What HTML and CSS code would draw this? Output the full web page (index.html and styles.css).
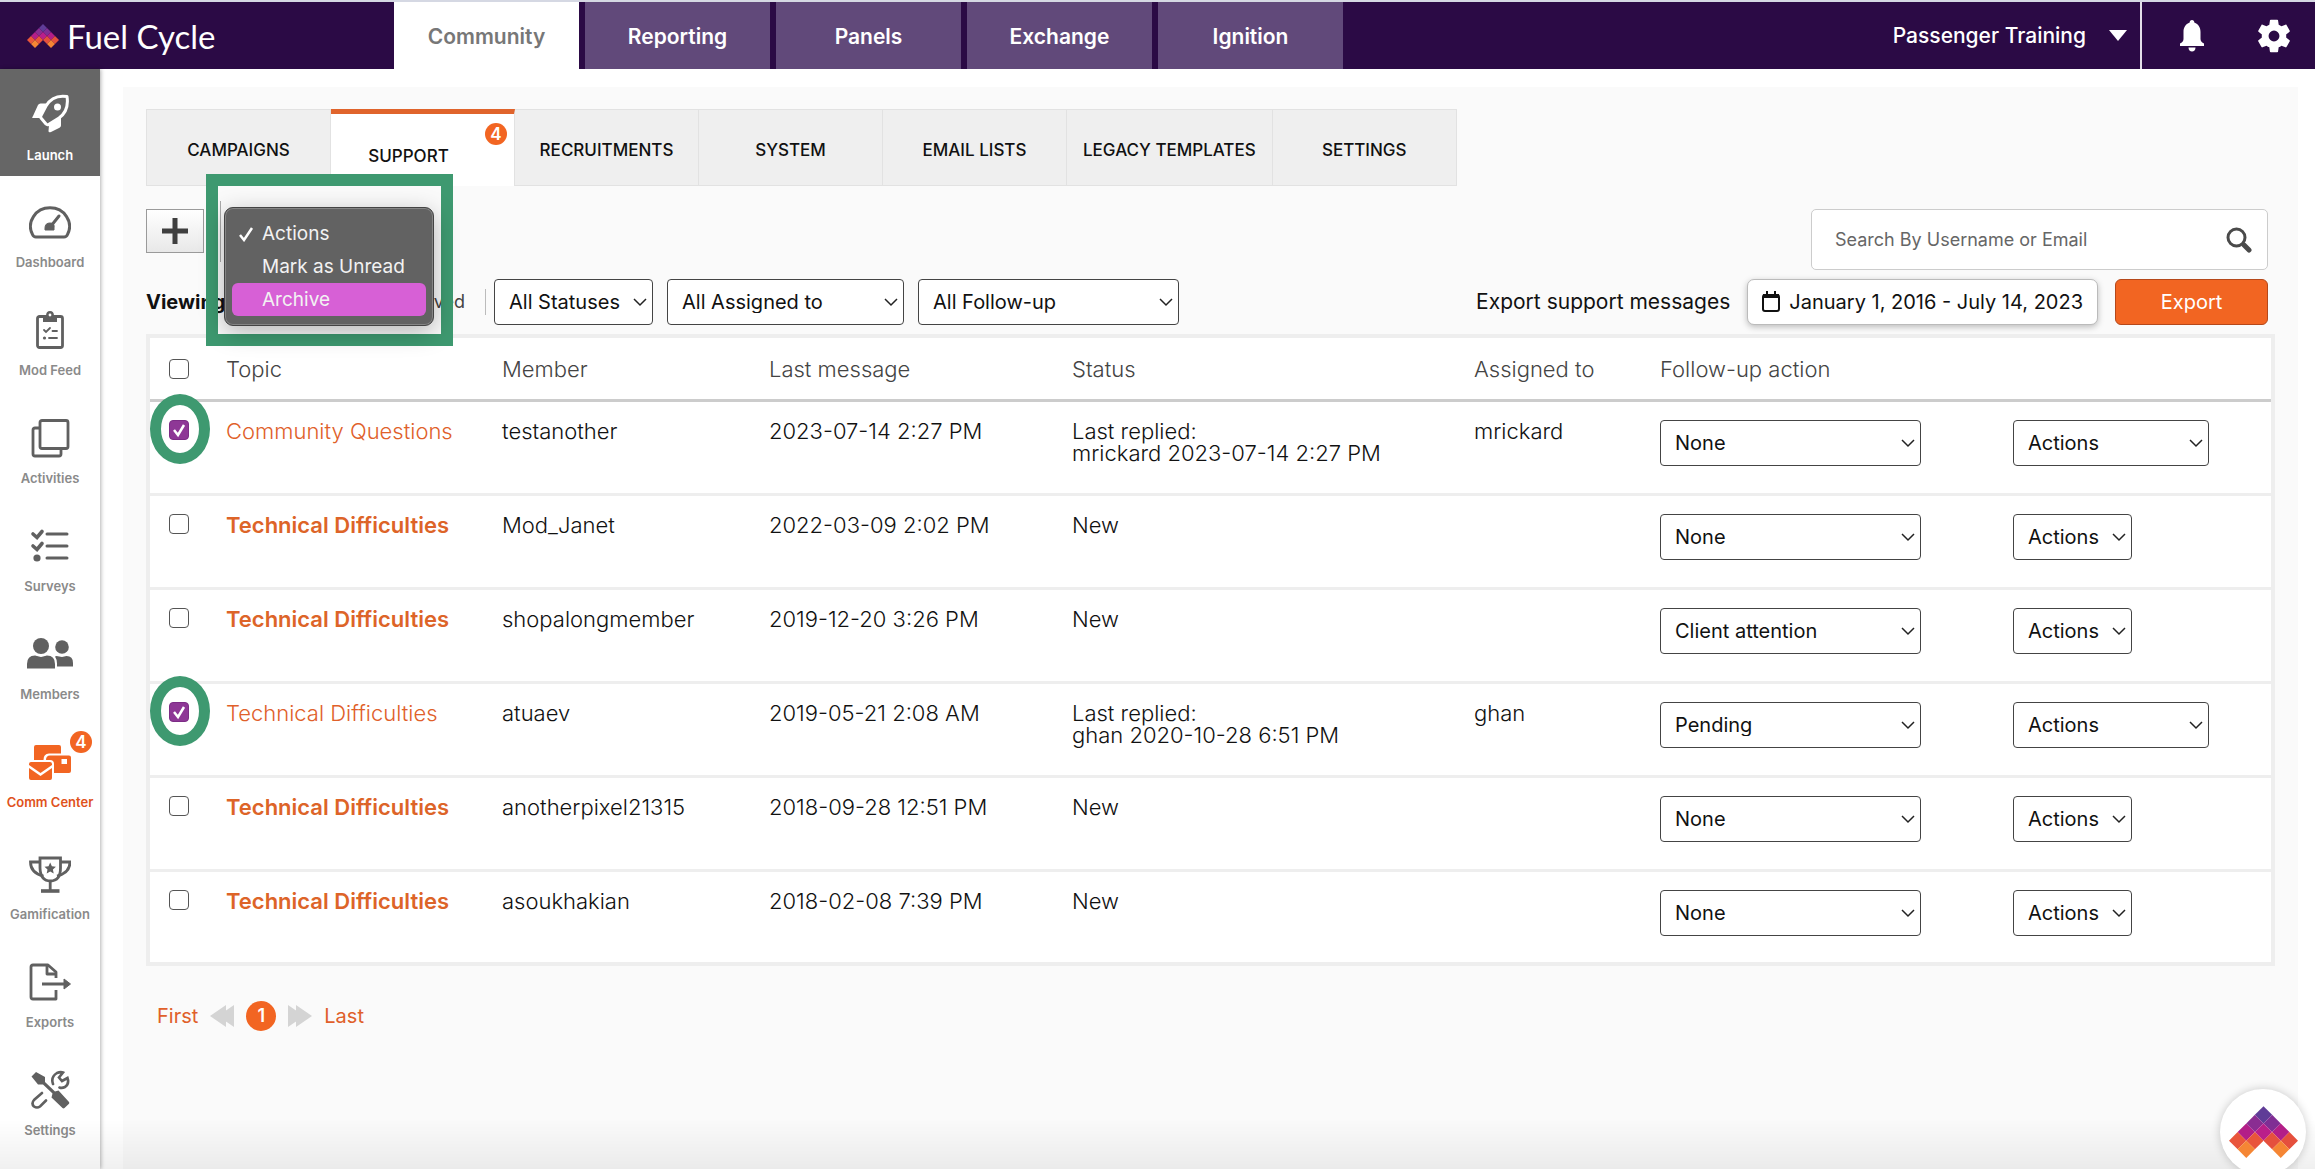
FILE: index.html
```html
<!DOCTYPE html>
<html lang="en">
<head>
    <meta charset="UTF-8">
    <meta name="viewport" content="width=device-width, initial-scale=1.0">
    <title>Fuel Cycle</title>
    <link rel="stylesheet" href="styles.css">
</head>
<body>
    <!-- shared logo mark -->
    <svg class="defs" width="0" height="0" aria-hidden="true">
        <symbol id="mark" viewBox="0 0 80 60">
            <path fill="#5f3c97" d="M40 0l10 10-10 10-10-10z"/>
            <path fill="#8a2d92" d="M30 10l10 10-10 10-10-10z"/>
            <path fill="#802e94" d="M50 10l10 10-10 10-10-10z"/>
            <path fill="#b31e88" d="M20 20l10 10-10 10-10-10zM60 20l10 10-10 10-10-10z"/>
            <path fill="#ba1f8a" d="M40 20l10 10-10 10-10-10z"/>
            <path fill="#e9553b" d="M10 30l10 10-10 10L0 40zM30 30l10 10-10 10-10-10z"/>
            <path fill="#e5503d" d="M50 30l10 10-10 10-10-10zM70 30l10 10-10 10-10-10z"/>
            <path fill="#f58634" d="M20 40l10 10-10 10-10-10zM60 40l10 10-10 10-10-10z"/>
        </symbol>
    </svg>

    <header class="topbar">
        <a class="brand" href="#">
            <svg class="brand-mark"><use href="#mark"/></svg>
            <span>Fuel Cycle</span>
        </a>
        <nav class="main-nav">
            <a class="active" href="#">Community</a>
            <a href="#">Reporting</a>
            <a href="#">Panels</a>
            <a href="#">Exchange</a>
            <a href="#">Ignition</a>
        </nav>
        <button class="account" type="button">Passenger Training
            <svg width="18" height="11" viewBox="0 0 18 11"><path fill="#fff" d="M0 0h18L9 11z"/></svg>
        </button>
        <div class="top-icons">
            <button type="button" aria-label="Notifications">
                <svg width="26" height="32" viewBox="0 0 26 32" fill="#fff"><path d="M13 0c1.500 0 2.300 1 2.300 2.500C19.500 4 21.500 7.500 21.500 12v7c0 2 1.500 3.500 3.500 4.500V26H1v-2.500C3 22.500 4.500 21 4.500 19v-7C4.500 7.500 6.500 4 10.700 2.500 10.700 1 11.500 0 13 0z"/><path d="M9.500 27.500h7c0 2.500-1.500 4-3.500 4s-3.500-1.500-3.500-4z"/></svg>
            </button>
            <button type="button" aria-label="Administration">
                <svg width="34" height="34" viewBox="2 2 20 20" fill="#fff"><path d="M19.140 12.940c.04-.3.06-.61.06-.94 0-.32-.02-.64-.07-.94l2.030-1.580c.18-.14.23-.41.12-.61l-1.920-3.320c-.12-.22-.37-.29-.59-.22l-2.390.96c-.5-.38-1.030-.7-1.620-.94l-.36-2.540c-.04-.24-.24-.41-.48-.41h-3.840c-.24 0-.43.17-.47.41l-.36 2.540c-.59.24-1.130.57-1.620.94l-2.390-.96c-.22-.08-.47 0-.59.22L2.740 8.870c-.12.21-.08.47.12.61l2.030 1.580c-.05.3-.09.63-.09.94s.02.64.07.94l-2.030 1.580c-.18.14-.23.41-.12.61l1.920 3.320c.12.22.37.29.59.22l2.390-.96c.5.38 1.030.7 1.620.94l.36 2.540c.05.24.24.41.48.41h3.840c.24 0 .44-.17.47-.41l.36-2.540c.59-.24 1.130-.56 1.620-.94l2.390.96c.22.08.47 0 .59-.22l1.920-3.320c.12-.22.07-.47-.12-.61l-2.010-1.580zM12 15.200A3.200 3.200 0 1 1 12 8.800a3.200 3.200 0 0 1 0 6.400z"/></svg>
            </button>
        </div>
    </header>

    <div class="layout">
        <nav class="sidebar">
            <a class="launch" href="#">
                <svg width="42" height="42" viewBox="0 0 42 42"><path fill="currentColor" d="M4 22 9 11q.8-1.500 2.500-1.500H20L12 24l-8.500 0q-1 0 .5-2zM20 31l12-9v9.500q0 1.500-1.500 2.300L22 38q-2.500 1-2.500-1z"/><path fill="#666" stroke="currentColor" stroke-width="3" stroke-linejoin="round" d="M38 2.500C28 1 21 5 17 12l-5 9.500q-.6 1.500 0 2.500l5 6q1 1 2.500.5L30 24C37 19 39.500 12 38 2.500z"/><circle cx="28.500" cy="13" r="3.500" fill="currentColor"/></svg>
                Launch
            </a>
            <a href="#">
                <svg width="42" height="42" viewBox="0 0 42 42" fill="none" stroke="currentColor" stroke-width="3"><path d="M7 36h28q2.500 0 3.500-2.500A19.500 18.500 0 1 0 3.500 33.500Q4.500 36 7 36z"/><path stroke-linecap="round" d="M22 25l8-10"/><path fill="currentColor" stroke-width="1" d="M16 29v-2q0-5 5-5t4 5v2z"/></svg>
                Dashboard
            </a>
            <a href="#">
                <svg width="42" height="42" viewBox="0 0 42 42" fill="none" stroke="currentColor" stroke-width="2.800" stroke-linecap="round"><rect x="8.500" y="7.500" width="25" height="31" rx="2"/><path fill="currentColor" stroke="none" d="M14 13V9q0-2 2-2h1q0-5 4-5t4 5h1q2 0 2 2v4z"/><circle cx="21" cy="6" r="1.400" fill="#fff" stroke="none"/><path stroke-width="1.800" d="M15 21l2 2 4-4M23.500 22H28M20 29h8"/><circle cx="15.500" cy="29" r="1.600" fill="currentColor" stroke="none"/></svg>
                Mod Feed
            </a>
            <a href="#">
                <svg width="42" height="42" viewBox="0 0 42 42" fill="none" stroke="currentColor" stroke-width="2.800"><rect x="11" y="3.500" width="28" height="28" rx="2"/><path d="M11 11H6q-2 0-2 2v24q0 2 2 2h24q2 0 2-2v-5"/></svg>
                Activities
            </a>
            <a href="#">
                <svg width="42" height="42" viewBox="0 0 42 42" fill="none" stroke="currentColor" stroke-width="3" stroke-linecap="round"><path d="M18 9h20M18 21h20M18 33h20"/><path stroke-width="3.600" d="M4 9l4 3.500L13 6.500M4 21l4 3.500 5-6"/><circle cx="8" cy="33" r="3.600" fill="currentColor" stroke="none"/></svg>
                Surveys
            </a>
            <a href="#">
                <svg width="48" height="42" viewBox="0 0 48 42" fill="currentColor"><circle cx="15" cy="13" r="8"/><circle cx="36" cy="14" r="6.800"/><path d="M1 35.500V31q0-8.500 8-8.500l6 1.500 6-1.500q8 0 8 8.500v4.500zM31 33.500h16V30q0-7-6.500-7L36 24l-5.500-1q-1 0-1.500.4 2 3 2 7z"/></svg>
                Members
            </a>
            <a class="current" href="#">
                <span class="with-badge">
                    <svg width="42" height="42" viewBox="0 0 42 42" fill="currentColor"><path d="M5 19V6q0-2 2-2h23q2 0 2 2v6.500H20q-5.500 0-5.500 6.500z"/><path d="M17 19q0-4.500 4-4.500h19q2 0 2 2V30q0 2-2 2H25v-9q0-4-4-4zM32.500 18v5H38v-5z" fill-rule="evenodd"/><path d="M0 24v-1q0-2 2-2h19q2 0 2 2v1L11.500 32zM0 27l11.500 8L23 27v10q0 2-2 2H2q-2 0-2-2z"/></svg>
                    <span class="badge">4</span>
                </span>
                Comm Center
            </a>
            <a class="gamification" href="#">
                <svg width="42" height="42" viewBox="0 0 42 42" fill="none" stroke="currentColor" stroke-width="2.800"><path d="M11 5h20.500v10q0 13-10 13T11 15z"/><path d="M11 9H1.500q0 11 13 14M31.500 9H41q0 11-13 14M21.200 28v9" /><path stroke-width="3.600" d="M12 38h18.500"/><path fill="currentColor" stroke="none" d="M21.200 9.500l1.700 3.700 4 .5-3 2.800.8 4-3.500-2-3.500 2 .8-4-3-2.800 4-.5z"/></svg>
                Gamification
            </a>
            <a href="#">
                <svg width="42" height="42" viewBox="0 0 42 42" fill="none" stroke="currentColor" stroke-width="2.800" stroke-linejoin="round"><path d="M27 17V11l-8-7H4Q2 4 2 6v30q0 2 2 2h23v-9"/><path d="M18 4v9h9M13 23h22"/><path fill="currentColor" stroke-width="1" d="M35 18l6.500 5-6.500 5z"/></svg>
                Exports
            </a>
            <a href="#">
                <svg width="42" height="42" viewBox="0 0 42 42" fill="none" stroke="currentColor" stroke-width="3"><path fill="currentColor" stroke="none" d="M2.500 7.500L7 3l9 5v5l10 9.500 3.500-1L40 33q.6 1 0 1.800L35.500 39q-1 .8-2 0L22.500 28.500l1-4-9.500-9H9z"/><path stroke-width="2.600" stroke-linecap="round" d="M13 24l-8 7q-3 3.500 0 6.500 3 2 6 0l6-6M24 15q-2.500-7 4-11 3.500-1.500 6-.5l-4 5 3 3.500 5.500-3q2 6-2.500 9-3 1.500-5.500.5"/></svg>
                Settings
            </a>
        </nav>

        <main class="content">
            <nav class="tabs">
                <a href="#">CAMPAIGNS</a>
                <a class="active" href="#">SUPPORT<span class="badge">4</span></a>
                <a href="#">RECRUITMENTS</a>
                <a href="#">SYSTEM</a>
                <a href="#">EMAIL LISTS</a>
                <a href="#">LEGACY TEMPLATES</a>
                <a href="#">SETTINGS</a>
            </nav>

            <div class="toolbar">
                <button class="add" type="button" aria-label="New message">
                    <svg width="28" height="28" viewBox="0 0 28 28"><path stroke="#3f3f3f" stroke-width="5" d="M14 1v26M1 14h26"/></svg>
                </button>
                <div class="bulk">
                    <ul class="menu">
                        <li><button type="button"><svg width="16" height="16" viewBox="0 0 16 16"><path fill="none" stroke="#fff" stroke-width="2.500" d="M2 9l4 5 8-12"/></svg>Actions</button></li>
                        <li><button type="button">Mark as Unread</button></li>
                        <li><button class="selected" type="button">Archive</button></li>
                    </ul>
                </div>
                <form class="search">
                    <input type="text" placeholder="Search By Username or Email" aria-label="Search By Username or Email">
                    <button type="submit" aria-label="Search">
                        <svg width="26" height="26" viewBox="0 0 26 26" fill="none" stroke="#4a4a4a"><circle cx="10.500" cy="10.500" r="8.500" stroke-width="3"/><path stroke-width="5" stroke-linecap="round" d="M18 18l5 5"/></svg>
                    </button>
                </form>
            </div>

            <div class="filters">
                <div class="viewing"><strong>Viewing</strong><span>ved</span></div>
                <select class="w-status" aria-label="Status"><option>All Statuses</option></select>
                <select class="w-assigned" aria-label="Assigned to"><option>All Assigned to</option></select>
                <select class="w-follow" aria-label="Follow-up"><option>All Follow-up</option></select>
                <div class="export">
                    <span>Export support messages</span>
                    <button class="date" type="button">
                        <svg width="18" height="22" viewBox="0 0 18 22" fill="none" stroke="#111" stroke-width="2"><rect x="1" y="4" width="16" height="16" rx="2"/><path stroke-width="4" d="M1 5h16"/><path d="M5 0v5M13 0v5"/></svg>
                        January 1, 2016 - July 14, 2023
                    </button>
                    <button class="export-btn" type="button">Export</button>
                </div>
            </div>

            <table class="messages">
                <colgroup>
                    <col class="c-check"><col class="c-topic"><col class="c-member"><col class="c-last">
                    <col class="c-status"><col class="c-assigned"><col class="c-follow"><col class="c-actions">
                </colgroup>
                <thead>
                    <tr>
                        <th><input type="checkbox" aria-label="Select all"></th>
                        <th>Topic</th>
                        <th>Member</th>
                        <th>Last message</th>
                        <th>Status</th>
                        <th>Assigned to</th>
                        <th>Follow-up action</th>
                        <th></th>
                    </tr>
                </thead>
                <tbody>
                    <tr>
                        <td><span class="ring"><input type="checkbox" aria-label="Select message" checked></span></td>
                        <td><a href="#">Community Questions</a></td>
                        <td>testanother</td>
                        <td>2023-07-14 2:27 PM</td>
                        <td>Last replied:<br>mrickard 2023-07-14 2:27 PM</td>
                        <td>mrickard</td>
                        <td><select class="w-follow" aria-label="Follow-up action"><option>None</option></select></td>
                        <td><select class="w-wide" aria-label="Actions"><option>Actions</option></select></td>
                    </tr>
                    <tr class="unread">
                        <td><input type="checkbox" aria-label="Select message"></td>
                        <td><a href="#">Technical Difficulties</a></td>
                        <td>Mod_Janet</td>
                        <td>2022-03-09 2:02 PM</td>
                        <td>New</td>
                        <td></td>
                        <td><select class="w-follow" aria-label="Follow-up action"><option>None</option></select></td>
                        <td><select class="w-small" aria-label="Actions"><option>Actions</option></select></td>
                    </tr>
                    <tr class="unread">
                        <td><input type="checkbox" aria-label="Select message"></td>
                        <td><a href="#">Technical Difficulties</a></td>
                        <td>shopalongmember</td>
                        <td>2019-12-20 3:26 PM</td>
                        <td>New</td>
                        <td></td>
                        <td><select class="w-follow" aria-label="Follow-up action"><option>Client attention</option></select></td>
                        <td><select class="w-small" aria-label="Actions"><option>Actions</option></select></td>
                    </tr>
                    <tr>
                        <td><span class="ring"><input type="checkbox" aria-label="Select message" checked></span></td>
                        <td><a href="#">Technical Difficulties</a></td>
                        <td>atuaev</td>
                        <td>2019-05-21 2:08 AM</td>
                        <td>Last replied:<br>ghan 2020-10-28 6:51 PM</td>
                        <td>ghan</td>
                        <td><select class="w-follow" aria-label="Follow-up action"><option>Pending</option></select></td>
                        <td><select class="w-wide" aria-label="Actions"><option>Actions</option></select></td>
                    </tr>
                    <tr class="unread">
                        <td><input type="checkbox" aria-label="Select message"></td>
                        <td><a href="#">Technical Difficulties</a></td>
                        <td>anotherpixel21315</td>
                        <td>2018-09-28 12:51 PM</td>
                        <td>New</td>
                        <td></td>
                        <td><select class="w-follow" aria-label="Follow-up action"><option>None</option></select></td>
                        <td><select class="w-small" aria-label="Actions"><option>Actions</option></select></td>
                    </tr>
                    <tr class="unread">
                        <td><input type="checkbox" aria-label="Select message"></td>
                        <td><a href="#">Technical Difficulties</a></td>
                        <td>asoukhakian</td>
                        <td>2018-02-08 7:39 PM</td>
                        <td>New</td>
                        <td></td>
                        <td><select class="w-follow" aria-label="Follow-up action"><option>None</option></select></td>
                        <td><select class="w-small" aria-label="Actions"><option>Actions</option></select></td>
                    </tr>
                </tbody>
            </table>

            <div class="pager">
                <a href="#">First</a>
                <a href="#" aria-label="Previous"><svg width="24" height="22" viewBox="0 0 24 22" fill="#d4d4d4"><path d="M0 11L16 0v22zM8 11L24 0v22z"/></svg></a>
                <span class="page">1</span>
                <a href="#" aria-label="Next"><svg width="24" height="22" viewBox="0 0 24 22" fill="#d4d4d4"><path d="M24 11L8 0v22zM16 11L0 0v22z"/></svg></a>
                <a href="#">Last</a>
            </div>
        </main>
    </div>

    <div class="fade"></div>
    <button class="help" type="button" aria-label="Help"><svg><use href="#mark"/></svg></button>
</body>
</html>
```

FILE: styles.css
```css
*,
*::before,
*::after {
    box-sizing: border-box;
}
body {
    margin: 0;
    min-height: 100vh;
    display: flex;
    flex-direction: column;
    background: #fff;
    color: #111;
    font-family: Inter, "Liberation Sans", sans-serif;
    font-size: 21px;
    line-height: 22px;
}
a {
    color: #e0602a;
    text-decoration: none;
}
button {
    font: inherit;
    color: inherit;
    border: none;
    background: none;
    padding: 0;
    cursor: pointer;
}
svg {
    display: block;
}
.defs {
    position: absolute;
}

/* top bar */
.topbar {
    display: flex;
    height: 69px;
    border-top: 2px solid #d5d8e3;
    background: #2b0a45;
    color: #fff;
}
.brand {
    display: flex;
    align-items: center;
    gap: 8px;
    width: 394px;
    padding-left: 27px;
    color: #fff;
    font-family: Lato, sans-serif;
    font-size: 33px;
    line-height: 40px;
}
.brand-mark {
    width: 32px;
    height: 24px;
}
.main-nav {
    display: flex;
    gap: 6px;
}
.main-nav a {
    display: flex;
    align-items: center;
    justify-content: center;
    width: 185px;
    padding-top: 2px;
    background: #61497a;
    color: #fff;
    font-weight: 600;
}
.main-nav a.active {
    background: #fff;
    color: #777;
}
.account {
    display: flex;
    align-items: center;
    gap: 23px;
    margin-left: auto;
    padding-right: 13px;
    border-right: 2px solid #e4dfe9;
    font-weight: 500;
}
.top-icons {
    display: flex;
    align-items: center;
    gap: 52px;
    padding: 0 24px 0 37px;
}

/* sidebar */
.layout {
    display: flex;
    flex: 1;
}
.sidebar {
    display: flex;
    flex-direction: column;
    width: 100px;
    box-shadow: 1px 0 4px rgba(0, 0, 0, 0.3);
}
.sidebar a {
    display: flex;
    flex-direction: column;
    align-items: center;
    gap: 11px;
    height: 108px;
    padding-top: 25px;
    color: #8a8a8a;
    font-size: 13px;
    line-height: 16px;
    font-weight: 600;
    white-space: nowrap;
}
.sidebar svg {
    color: #606060;
}
.sidebar .launch {
    height: 107px;
    background: #666;
    color: #fff;
}
.sidebar .launch svg {
    color: #fff;
}
.sidebar .current {
    color: #e0521c;
}
.sidebar .current svg {
    color: #f26522;
}
.sidebar .gamification {
    margin-top: 4px;
}
.with-badge {
    position: relative;
}
.badge {
    position: absolute;
    top: -10px;
    right: -21px;
    width: 22px;
    height: 22px;
    border-radius: 50%;
    background: #f26522;
    color: #fff;
    font-size: 17px;
    line-height: 22px;
    font-weight: 600;
    text-align: center;
}

/* content */
.content {
    flex: 1;
    min-width: 0;
    margin: 18px 17px 0 23px;
    padding: 22px 23px 0;
    background: #fafafa;
}
.tabs {
    display: flex;
    width: max-content;
    border: 1px solid #e2e2e2;
    border-width: 1px 0 1px 1px;
    background: #efefef;
}
.tabs a {
    position: relative;
    display: flex;
    align-items: center;
    justify-content: center;
    min-width: 184px;
    height: 75px;
    padding: 5px 16px 0;
    border-right: 1px solid #e2e2e2;
    color: #111;
    font-size: 17px;
    font-weight: 500;
}
.tabs .active {
    height: 77px;
    margin: -1px 0;
    padding: 12px 44px 0 16px;
    border-top: 5px solid #e0642c;
    background: #fff;
}
.tabs .badge {
    top: 9px;
    right: 7px;
}
.toolbar {
    display: flex;
    align-items: flex-start;
    margin-top: 23px;
    padding-right: 7px;
}
.add {
    display: flex;
    align-items: center;
    justify-content: center;
    width: 58px;
    height: 44px;
    border: 1px solid #9a9a9a;
    background: linear-gradient(#fff, #e8e8e8);
}

/* open bulk menu and its highlight frame */
.bulk {
    position: relative;
    z-index: 2;
    width: 248px;
}
.bulk::before {
    content: "";
    position: absolute;
    top: -35px;
    left: 2px;
    width: 247px;
    height: 172px;
    border: 12px solid #3e9970;
}
.bulk::after {
    content: "";
    position: absolute;
    top: -8px;
    left: 16px;
    height: 61px;
    border-left: 1px solid #aaa;
}
.menu {
    position: absolute;
    z-index: 1;
    top: -2px;
    left: 20px;
    width: 210px;
    margin: 0;
    padding: 9px 7px;
    list-style: none;
    border: 1px solid #444;
    border-radius: 9px;
    background: #626262;
    box-shadow: inset 0 0 0 1px #858585, 0 6px 24px rgba(0, 0, 0, 0.28);
    color: #f2f2f2;
    font-size: 19px;
}
.menu button {
    position: relative;
    display: block;
    width: 100%;
    height: 33px;
    padding-left: 30px;
    text-align: left;
    border-radius: 6px;
}
.menu svg {
    position: absolute;
    left: 6px;
    top: 9px;
}
.menu .selected {
    background: #d760d6;
}

.search {
    display: flex;
    align-items: center;
    width: 457px;
    height: 61px;
    margin-left: auto;
    padding: 0 15px 0 23px;
    border: 1px solid #ccc;
    border-radius: 5px;
    background: #fff;
}
.search input {
    flex: 1;
    min-width: 0;
    border: none;
    outline: none;
    padding: 0;
    background: none;
    font: inherit;
    font-size: 18px;
}
.search input::placeholder {
    color: #666;
}

.filters {
    display: flex;
    align-items: center;
    gap: 14px;
    margin: 9px 7px 9px 0;
}
.viewing {
    display: flex;
    align-items: center;
    justify-content: space-between;
    width: 340px;
    height: 26px;
    margin-right: -6px;
    padding-right: 20px;
    border-right: 1px solid #bbb;
}
.viewing strong {
    font-size: 20px;
    font-weight: 700;
}
.viewing span {
    color: #444;
    font-size: 18px;
}
.filters .export {
    display: flex;
    align-items: center;
    gap: 17px;
    margin-left: auto;
}
.date {
    display: flex;
    align-items: center;
    gap: 9px;
    height: 46px;
    padding: 0 14px;
    border: 1px solid #bbb;
    border-radius: 7px;
    background: #fff;
    box-shadow: 0 2px 6px rgba(0, 0, 0, 0.25);
    font-size: 20px;
}
.export-btn {
    width: 153px;
    height: 46px;
    border: 1px solid #b5481a;
    border-radius: 6px;
    background: #f26522;
    color: #fff;
    font-size: 20px;
}
select {
    appearance: none;
    height: 46px;
    padding: 0 28px 0 14px;
    border: 1px solid #444;
    border-radius: 4px;
    background: #fff url("data:image/svg+xml,%3Csvg xmlns='http://www.w3.org/2000/svg' width='14' height='9'%3E%3Cpath fill='none' stroke='%23222' stroke-width='1.5' d='M1 1l6 6 6-6'/%3E%3C/svg%3E") no-repeat right 5px center;
    color: #111;
    font: inherit;
    font-size: 20px;
}
.w-status {
    width: 159px;
}
.w-assigned {
    width: 237px;
}
.w-follow {
    width: 261px;
}
.w-wide {
    width: 196px;
}
.w-small {
    width: 119px;
}

/* message table */
.messages {
    width: 100%;
    table-layout: fixed;
    border-collapse: separate;
    border-spacing: 0;
    border: 4px solid #eee;
    background: #fff;
    font-size: 22px;
    font-weight: 300;
}
.c-check { width: 76px; }
.c-topic { width: 276px; }
.c-member { width: 267px; }
.c-last { width: 303px; }
.c-status { width: 402px; }
.c-assigned { width: 186px; }
.c-follow { width: 353px; }
.c-actions { width: 258px; }
.messages th {
    height: 64px;
    padding: 0;
    border-bottom: 3px solid #ccc;
    color: #444;
    font-weight: 300;
    text-align: left;
}
.messages td {
    height: 94px;
    padding: 18px 0 0;
    border-bottom: 3px solid #eee;
    vertical-align: top;
}
.messages tr:last-child td {
    height: 90px;
    border-bottom: none;
}
.messages th:first-child,
.messages td:first-child {
    padding-left: 19px;
}
.messages select {
    display: block;
    font-weight: 400;
}
.messages .unread a {
    color: #dd6428;
    font-weight: 600;
}
input[type="checkbox"] {
    appearance: none;
    display: block;
    width: 20px;
    height: 20px;
    margin: 0;
    border: 1px solid #555;
    border-radius: 4px;
    background: #fff;
}
input[type="checkbox"]:checked {
    border-color: #7c2c86;
    background: #8e3796 url("data:image/svg+xml,%3Csvg xmlns='http://www.w3.org/2000/svg' width='16' height='16'%3E%3Cpath fill='none' stroke='white' stroke-width='2.5' d='M3 8l4 5 6-10'/%3E%3C/svg%3E") no-repeat center;
}
.ring {
    position: relative;
    display: block;
    width: 20px;
}
.ring::after {
    content: "";
    position: absolute;
    top: -26px;
    left: -19px;
    width: 60px;
    height: 70px;
    border: 11px solid #3e9970;
    border-radius: 50%;
}

.pager {
    display: flex;
    align-items: center;
    gap: 12px;
    margin-top: 35px;
    padding-left: 11px;
    font-size: 20px;
}
.page {
    width: 30px;
    height: 30px;
    border-radius: 50%;
    background: #f26522;
    color: #fff;
    font-size: 18px;
    line-height: 30px;
    font-weight: 600;
    text-align: center;
}

.fade {
    position: fixed;
    left: 0;
    right: 0;
    bottom: 0;
    height: 50px;
    background: linear-gradient(rgba(0, 0, 0, 0), rgba(0, 0, 0, 0.06));
    pointer-events: none;
}
.help {
    position: fixed;
    right: 9px;
    bottom: -6px;
    display: flex;
    align-items: center;
    justify-content: center;
    width: 86px;
    height: 86px;
    border-radius: 50%;
    background: #fff;
    box-shadow: 0 0 10px rgba(0, 0, 0, 0.2);
}
.help svg {
    width: 69px;
    height: 52px;
}
```
